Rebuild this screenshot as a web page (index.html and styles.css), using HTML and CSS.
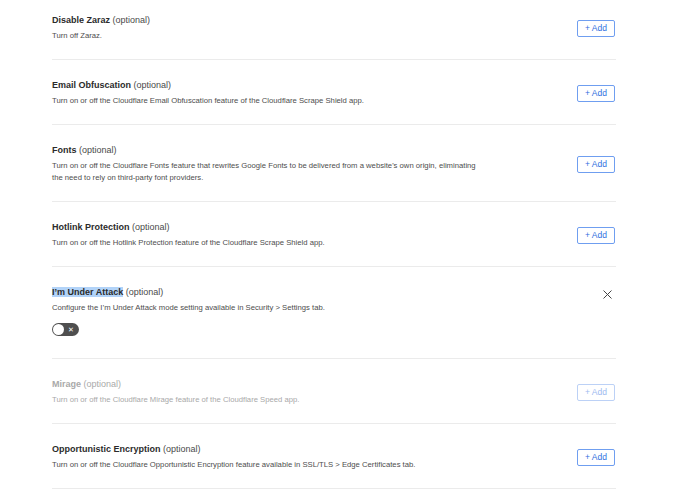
FILE: index.html
```html
<!DOCTYPE html>
<html lang="en">
<head>
<meta charset="utf-8">
<title>Settings</title>
<link rel="stylesheet" href="styles.css">
</head>
<body>
<div class="list">
  <div class="row">
    <div class="info">
      <div class="title"><b>Disable Zaraz</b> (optional)</div>
      <div class="desc">Turn off Zaraz.</div>
    </div>
    <button class="add">+ Add</button>
  </div>
  <div class="row">
    <div class="info">
      <div class="title"><b>Email Obfuscation</b> (optional)</div>
      <div class="desc">Turn on or off the Cloudflare Email Obfuscation feature of the Cloudflare Scrape Shield app.</div>
    </div>
    <button class="add">+ Add</button>
  </div>
  <div class="row">
    <div class="info">
      <div class="title"><b>Fonts</b> (optional)</div>
      <div class="desc">Turn on or off the Cloudflare Fonts feature that rewrites Google Fonts to be delivered from a website's own origin, eliminating the need to rely on third-party font providers.</div>
    </div>
    <button class="add">+ Add</button>
  </div>
  <div class="row">
    <div class="info">
      <div class="title"><b>Hotlink Protection</b> (optional)</div>
      <div class="desc">Turn on or off the Hotlink Protection feature of the Cloudflare Scrape Shield app.</div>
    </div>
    <button class="add">+ Add</button>
  </div>
  <div class="row row-top">
    <div class="info">
      <div class="title"><b class="sel">I’m Under Attack</b> (optional)</div>
      <div class="desc">Configure the I’m Under Attack mode setting available in Security &gt; Settings tab.</div>
      <div class="toggle"><span class="knob"></span><span class="tx">✕</span></div>
    </div>
    <button class="close" aria-label="Remove">
      <svg width="9" height="9" viewBox="0 0 9 9"><path d="M0.5 0.5L8.5 8.5M8.5 0.5L0.5 8.5" stroke="#444" stroke-width="1" fill="none"/></svg>
    </button>
  </div>
  <div class="row disabled">
    <div class="info">
      <div class="title"><b>Mirage</b> (optional)</div>
      <div class="desc">Turn on or off the Cloudflare Mirage feature of the Cloudflare Speed app.</div>
    </div>
    <button class="add">+ Add</button>
  </div>
  <div class="row">
    <div class="info">
      <div class="title"><b>Opportunistic Encryption</b> (optional)</div>
      <div class="desc">Turn on or off the Cloudflare Opportunistic Encryption feature available in SSL/TLS &gt; Edge Certificates tab.</div>
    </div>
    <button class="add">+ Add</button>
  </div>
</div>
</body>
</html>
```
FILE: styles.css
```css
html, body {
  margin: 0;
  padding: 0;
  background: #fff;
}
body {
  font-family: "Liberation Sans", Arial, sans-serif;
  color: #313131;
  overflow: hidden;
}
.list {
  width: 564px;
  margin: -5px 0 0 52px;
}
.row {
  display: flex;
  align-items: center;
  justify-content: space-between;
  padding: 19px 0 17px;
  border-bottom: 1px solid #ebebeb;
}
.row-top {
  align-items: flex-start;
  padding-bottom: 22px;
}
.info {
  display: flex;
  flex-direction: column;
}
.title {
  font-size: 9px;
  line-height: 12px;
  color: #4a4a4a;
}
.title b {
  font-weight: 700;
  color: #2b2b2b;
}
.sel {
  background: #b2d3f8;
}
.desc {
  margin-top: 4px;
  font-size: 7.7px;
  line-height: 12px;
  color: #4d4d4d;
  max-width: 428px;
}
.add {
  width: 38px;
  height: 17px;
  margin-right: 1px;
  padding: 0;
  border: 1px solid #6f9ef0;
  border-radius: 2px;
  background: #fff;
  color: #2f6fe0;
  font-family: inherit;
  font-size: 8.5px;
  line-height: 15px;
  text-align: center;
}
.close {
  width: 16px;
  height: 16px;
  padding: 0;
  margin: 0 1px 0 0;
  border: 0;
  background: transparent;
  display: flex;
  align-items: center;
  justify-content: center;
}
.toggle {
  margin-top: 9px;
  width: 27px;
  height: 13px;
  border-radius: 7px;
  background: #4f4f4f;
  display: flex;
  align-items: center;
  justify-content: space-between;
  box-sizing: border-box;
  padding: 0 5px 0 1px;
}
.knob {
  width: 11px;
  height: 11px;
  border-radius: 50%;
  background: #fff;
}
.tx {
  color: #fff;
  font-size: 7px;
  line-height: 7px;
}
.disabled .title,
.disabled .title b,
.disabled .desc {
  color: #a9a9a9;
}
.disabled .add {
  border-color: #bcd1f6;
  color: #9dbaf0;
}
```
